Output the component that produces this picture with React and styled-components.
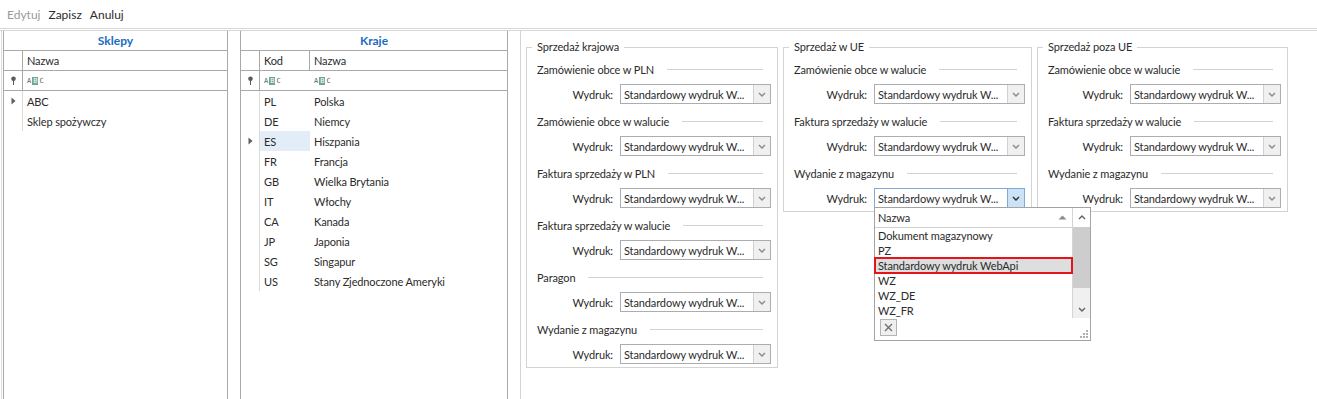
import React from "react";
import styled, { createGlobalStyle } from "styled-components";

const GlobalStyle = createGlobalStyle`
  html, body { margin: 0; padding: 0; background: #fff; }
  body {
    font-family: Lato, "Open Sans", "Liberation Sans", sans-serif;
    font-size: 11px;
    letter-spacing: -0.12px;
    color: #2b2b2b;
  }
  * { box-sizing: border-box; }
`;

const Page = styled.div`
  height: 100vh;
  display: flex;
  flex-direction: column;
  overflow: hidden;
`;

const Toolbar = styled.div`
  height: 29px;
  flex: none;
  display: flex;
  align-items: center;
  gap: 8px;
  padding-left: 7px;
  border-bottom: 1px solid #d7d7d7;
  font-size: 12px;
  letter-spacing: 0;
`;

const ToolButton = styled.span`
  color: ${(p) => (p.$disabled ? "#9a9a9a" : "#2b2b2b")};
`;

const Main = styled.div`
  flex: 1;
  display: flex;
  margin-top: 1px;
  border-top: 1px solid #d7d7d7;
  padding-left: 1px;
  min-height: 0;
`;

const GridsPane = styled.div`
  display: flex;
  gap: 12px;
  padding: 0 12px 0 1px;
  border-left: 1px solid #dcdcdc;
  border-right: 1px solid #d4d4d4;
`;

const Grid = styled.div`
  width: ${(p) => p.$w}px;
  border-left: 1px solid #a9a9a9;
  border-right: 1px solid #a9a9a9;
  display: flex;
  flex-direction: column;
`;

const GridTitle = styled.div`
  height: 20px;
  border-bottom: 1px solid #a9a9a9;
  display: flex;
  align-items: center;
  justify-content: center;
  color: #1a6cc3;
  font-weight: 700;
  font-size: 12px;
  letter-spacing: 0;
`;

const Row = styled.div`
  display: flex;
  height: 20px;
  border-bottom: ${(p) => (p.$line ? "1px solid #a9a9a9" : "none")};
`;

const IndCell = styled.div`
  width: 19px;
  flex: none;
  border-right: 1px solid ${(p) => (p.$light ? "#d9d9d9" : "#a9a9a9")};
  display: flex;
  align-items: center;
  justify-content: center;
`;

const Cell = styled.div`
  width: ${(p) => (p.$w ? `${p.$w}px` : "auto")};
  flex: ${(p) => (p.$w ? "none" : 1)};
  padding-left: 4px;
  display: flex;
  align-items: center;
  white-space: nowrap;
  border-right: ${(p) => (p.$sep ? "1px solid #a9a9a9" : "none")};
  background: ${(p) => (p.$active ? "#e2edf8" : "transparent")};
`;

const AbcIcon = styled.span`
  display: inline-flex;
  align-items: center;
  gap: 1px;
  font-family: "DejaVu Sans Mono", monospace;
  font-size: 7px;
  line-height: 8px;
  letter-spacing: 0;
  color: #5f5f5f;

  b {
    font-weight: 400;
    background: #6fa592;
    color: #fff;
    padding: 0 1px;
  }
`;

const RightPane = styled.div`
  flex: 1;
  display: flex;
  align-items: flex-start;
  gap: 5px;
  padding: 8px 0 0 5px;
`;

const GroupBox = styled.fieldset`
  width: ${(p) => p.$w}px;
  margin: 0;
  padding: 0;
  min-width: 0;
  border: 1px solid #d3d3d3;
`;

const GroupTitle = styled.legend`
  margin-left: 5px;
  padding: 0 5px;
  line-height: 16px;
`;

const GroupBody = styled.div`
  padding: 4px 6px 3px 10px;
`;

const Section = styled.div`
  & + & {
    margin-top: 7px;
  }
`;

const SectionHead = styled.div`
  height: 20px;
  display: flex;
  align-items: center;
  white-space: nowrap;
`;

const SectionLine = styled.div`
  flex: 1;
  height: 1px;
  background: #d3d3d3;
  margin: 0 8px 0 13px;
`;

const PrintRow = styled.div`
  margin-top: 5px;
  display: flex;
  justify-content: flex-end;
  align-items: center;
  gap: 7px;
`;

const Combo = styled.div`
  position: relative;
  width: 151px;
  height: 20px;
  display: flex;
  background: #fff;
  border: 1px solid ${(p) => (p.$open ? "#7ea9d8" : "#abadb3")};
`;

const ComboText = styled.div`
  flex: 1;
  padding-left: 3px;
  display: flex;
  align-items: center;
  white-space: nowrap;
  overflow: hidden;
`;

const ComboButton = styled.div`
  width: 17px;
  flex: none;
  display: flex;
  align-items: center;
  justify-content: center;
  background: ${(p) => (p.$open ? "#cce3f7" : "#f0f0f0")};
  border-left: 1px solid ${(p) => (p.$open ? "#7ea9d8" : "#d0d0d0")};
  color: ${(p) => (p.$open ? "#2d2d2d" : "#8a8a8a")};
`;

const Popup = styled.div`
  position: absolute;
  top: 100%;
  left: -1px;
  width: 217px;
  height: 134px;
  background: #fff;
  border: 1px solid #a3a3a3;
  display: flex;
  flex-direction: column;
  z-index: 10;
`;

const PopupMain = styled.div`
  height: 110px;
  display: flex;
`;

const PopupList = styled.div`
  flex: 1;
  display: flex;
  flex-direction: column;
  border-right: 1px solid #d5d5d5;
`;

const PopupHead = styled.div`
  height: 20px;
  flex: none;
  display: flex;
  align-items: center;
  justify-content: space-between;
  padding: 0 5px 0 3px;
  border-bottom: 1px solid #cfcfcf;
`;

const PopupItem = styled.div`
  height: 15px;
  display: flex;
  align-items: center;
  padding-left: 3px;
  white-space: nowrap;
  background: ${(p) => (p.$selected ? "#dedede" : "transparent")};
  outline: ${(p) => (p.$selected ? "2px solid #e3141c" : "none")};
  outline-offset: -1px;
`;

const ScrollBar = styled.div`
  width: 17px;
  flex: none;
  display: flex;
  flex-direction: column;
  background: #f0f0f0;
`;

const ScrollArrow = styled.div`
  height: ${(p) => p.$h}px;
  flex: none;
  display: flex;
  align-items: center;
  justify-content: center;
  background: ${(p) => (p.$white ? "#fff" : "#f0f0f0")};
  color: #606060;
`;

const ScrollThumb = styled.div`
  height: 61px;
  flex: none;
  background: #cdcdcd;
`;

const ScrollTrack = styled.div`
  flex: 1;
`;

const PopupFooter = styled.div`
  flex: 1;
  display: flex;
  align-items: flex-start;
  justify-content: space-between;
  padding: 1px 2px 2px 5px;
`;

const ClearButton = styled.div`
  width: 17px;
  height: 17px;
  display: flex;
  align-items: center;
  justify-content: center;
  background: #efefef;
  border: 1px solid #b4b4b4;
  color: #707070;
`;

const Grip = styled.div`
  align-self: flex-end;
  display: flex;
`;

const Chevron = ({ up }) => (
  <svg width="8" height="5" viewBox="0 0 8 5">
    <path
      d={up ? "M1 4 L4 1 L7 4" : "M1 1 L4 4 L7 1"}
      fill="none"
      stroke="currentColor"
      strokeWidth="1.4"
    />
  </svg>
);

const Pin = () => (
  <svg width="7" height="9" viewBox="0 0 7 9">
    <circle cx="3.5" cy="2.8" r="2.3" fill="#5a5a5a" />
    <rect x="3" y="4" width="1" height="5" fill="#5a5a5a" />
  </svg>
);

const RowArrow = () => (
  <svg width="5" height="8" viewBox="0 0 5 8">
    <path d="M0.5 0.5 L4.5 4 L0.5 7.5 Z" fill="#5f5f5f" />
  </svg>
);

const Abc = () => (
  <AbcIcon>
    A<b>B</b>C
  </AbcIcon>
);

const stores = ["ABC", "Sklep spożywczy"];

const countries = [
  ["PL", "Polska"],
  ["DE", "Niemcy"],
  ["ES", "Hiszpania"],
  ["FR", "Francja"],
  ["GB", "Wielka Brytania"],
  ["IT", "Włochy"],
  ["CA", "Kanada"],
  ["JP", "Japonia"],
  ["SG", "Singapur"],
  ["US", "Stany Zjednoczone Ameryki"],
];

const groups = [
  {
    title: "Sprzedaż krajowa",
    w: 252,
    items: [
      "Zamówienie obce w PLN",
      "Zamówienie obce w walucie",
      "Faktura sprzedaży w PLN",
      "Faktura sprzedaży w walucie",
      "Paragon",
      "Wydanie z magazynu",
    ],
  },
  {
    title: "Sprzedaż w UE",
    w: 249,
    open: 2,
    items: ["Zamówienie obce w walucie", "Faktura sprzedaży w walucie", "Wydanie z magazynu"],
  },
  {
    title: "Sprzedaż poza UE",
    w: 251,
    items: ["Zamówienie obce w walucie", "Faktura sprzedaży w walucie", "Wydanie z magazynu"],
  },
];

const printouts = [
  "Dokument magazynowy",
  "PZ",
  "Standardowy wydruk WebApi",
  "WZ",
  "WZ_DE",
  "WZ_FR",
];

function Dropdown() {
  return (
    <Popup>
      <PopupMain>
        <PopupList>
          <PopupHead>
            <span>Nazwa</span>
            <svg width="9" height="5" viewBox="0 0 9 5">
              <path d="M0.5 4.5 L4.5 0.5 L8.5 4.5 Z" fill="#8c8c8c" />
            </svg>
          </PopupHead>
          {printouts.map((name) => (
            <PopupItem key={name} $selected={name === "Standardowy wydruk WebApi"}>
              {name}
            </PopupItem>
          ))}
        </PopupList>
        <ScrollBar>
          <ScrollArrow $h={19} $white>
            <Chevron up />
          </ScrollArrow>
          <ScrollThumb />
          <ScrollTrack />
          <ScrollArrow $h={17}>
            <Chevron />
          </ScrollArrow>
        </ScrollBar>
      </PopupMain>
      <PopupFooter>
        <ClearButton>
          <svg width="9" height="9" viewBox="0 0 9 9">
            <path d="M1 1 L8 8 M8 1 L1 8" stroke="currentColor" strokeWidth="1.4" />
          </svg>
        </ClearButton>
        <Grip>
          <svg width="8" height="8" viewBox="0 0 8 8" fill="#b0b0b0">
            <rect x="6" y="0" width="2" height="2" />
            <rect x="3" y="3" width="2" height="2" />
            <rect x="6" y="3" width="2" height="2" />
            <rect x="0" y="6" width="2" height="2" />
            <rect x="3" y="6" width="2" height="2" />
            <rect x="6" y="6" width="2" height="2" />
          </svg>
        </Grip>
      </PopupFooter>
    </Popup>
  );
}

export default function App() {
  return (
    <Page>
      <GlobalStyle />
      <Toolbar>
        <ToolButton $disabled>Edytuj</ToolButton>
        <ToolButton>Zapisz</ToolButton>
        <ToolButton>Anuluj</ToolButton>
      </Toolbar>

      <Main>
        <GridsPane>
          <Grid $w={225}>
            <GridTitle>Sklepy</GridTitle>
            <Row $line>
              <IndCell />
              <Cell>Nazwa</Cell>
            </Row>
            <Row $line>
              <IndCell>
                <Pin />
              </IndCell>
              <Cell>
                <Abc />
              </Cell>
            </Row>
            {stores.map((name, i) => (
              <Row key={name}>
                <IndCell $light>{i === 0 && <RowArrow />}</IndCell>
                <Cell>{name}</Cell>
              </Row>
            ))}
          </Grid>

          <Grid $w={268}>
            <GridTitle>Kraje</GridTitle>
            <Row $line>
              <IndCell />
              <Cell $w={50} $sep>
                Kod
              </Cell>
              <Cell>Nazwa</Cell>
            </Row>
            <Row $line>
              <IndCell>
                <Pin />
              </IndCell>
              <Cell $w={50}>
                <Abc />
              </Cell>
              <Cell>
                <Abc />
              </Cell>
            </Row>
            {countries.map(([code, name]) => (
              <Row key={code}>
                <IndCell $light>{code === "ES" && <RowArrow />}</IndCell>
                <Cell $w={50} $active={code === "ES"}>
                  {code}
                </Cell>
                <Cell>{name}</Cell>
              </Row>
            ))}
          </Grid>
        </GridsPane>

        <RightPane>
          {groups.map((g) => (
            <GroupBox key={g.title} $w={g.w}>
              <GroupTitle>{g.title}</GroupTitle>
              <GroupBody>
                {g.items.map((label, i) => (
                  <Section key={label}>
                    <SectionHead>
                      {label}
                      <SectionLine />
                    </SectionHead>
                    <PrintRow>
                      Wydruk:
                      <Combo $open={g.open === i}>
                        <ComboText>Standardowy wydruk W...</ComboText>
                        <ComboButton $open={g.open === i}>
                          <Chevron />
                        </ComboButton>
                        {g.open === i && <Dropdown />}
                      </Combo>
                    </PrintRow>
                  </Section>
                ))}
              </GroupBody>
            </GroupBox>
          ))}
        </RightPane>
      </Main>
    </Page>
  );
}
